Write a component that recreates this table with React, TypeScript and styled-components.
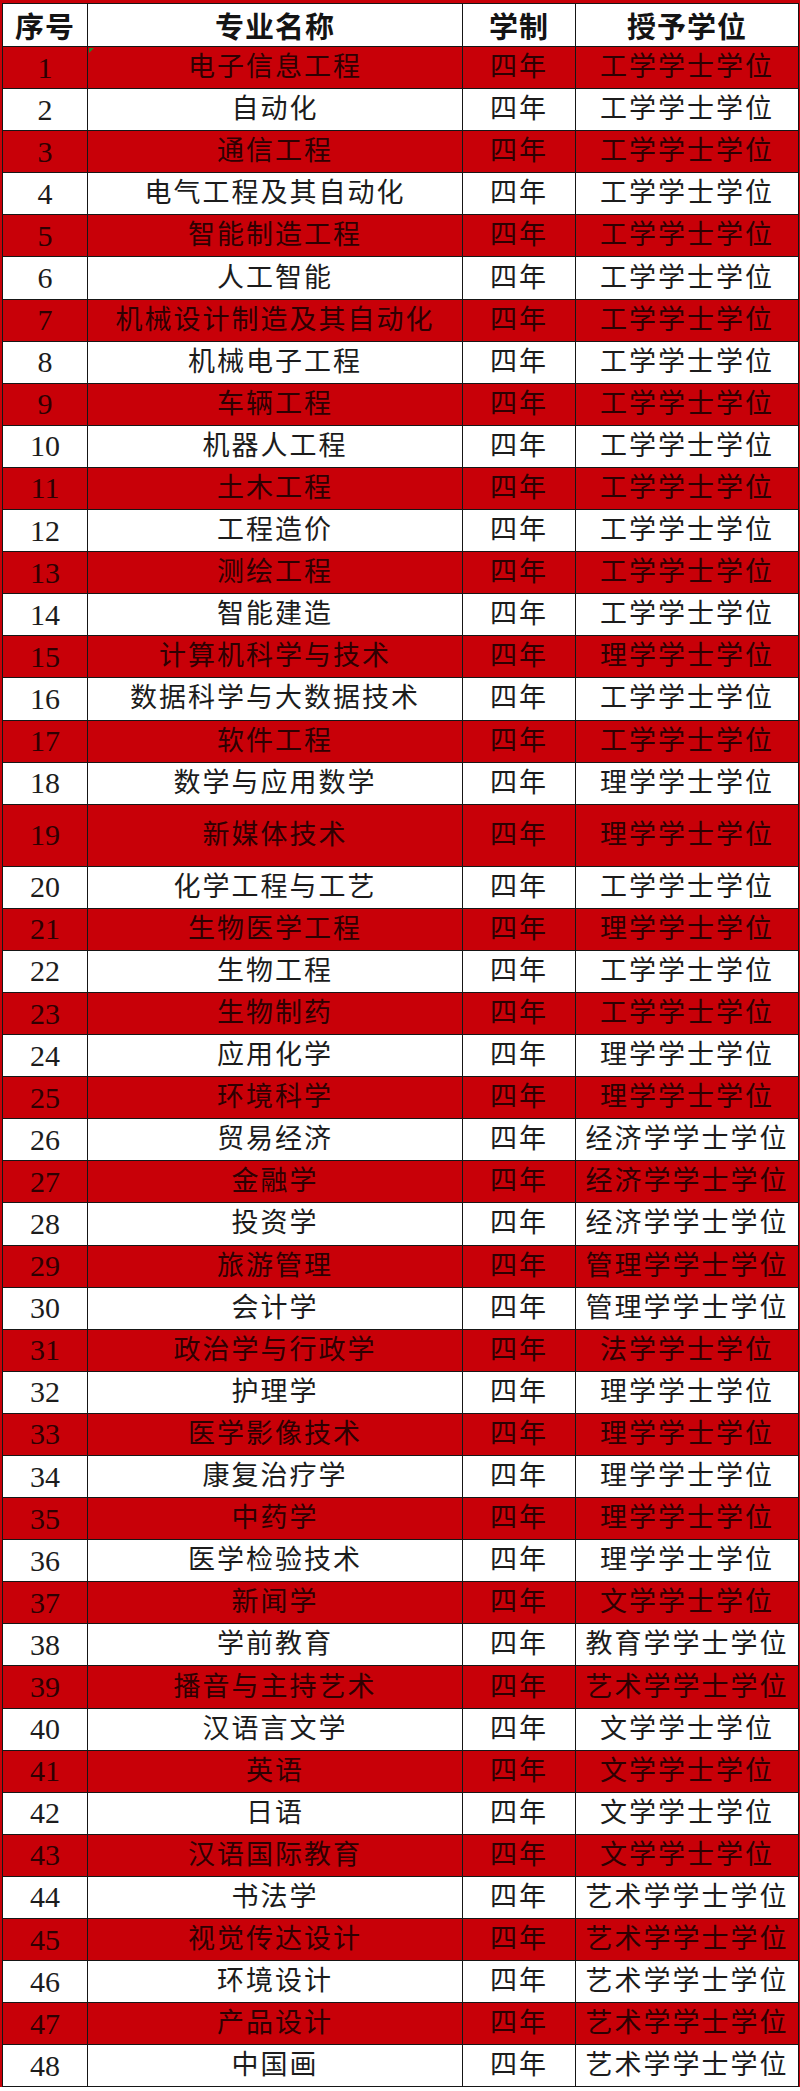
import { createGlobalStyle, styled } from "styled-components";

type Major = {
  no: number;
  name: string;
  degree: string;
  tall?: boolean;
};

const majors: Major[] = [
  { no: 1, name: "电子信息工程", degree: "工学学士学位" },
  { no: 2, name: "自动化", degree: "工学学士学位" },
  { no: 3, name: "通信工程", degree: "工学学士学位" },
  { no: 4, name: "电气工程及其自动化", degree: "工学学士学位" },
  { no: 5, name: "智能制造工程", degree: "工学学士学位" },
  { no: 6, name: "人工智能", degree: "工学学士学位" },
  { no: 7, name: "机械设计制造及其自动化", degree: "工学学士学位" },
  { no: 8, name: "机械电子工程", degree: "工学学士学位" },
  { no: 9, name: "车辆工程", degree: "工学学士学位" },
  { no: 10, name: "机器人工程", degree: "工学学士学位" },
  { no: 11, name: "土木工程", degree: "工学学士学位" },
  { no: 12, name: "工程造价", degree: "工学学士学位" },
  { no: 13, name: "测绘工程", degree: "工学学士学位" },
  { no: 14, name: "智能建造", degree: "工学学士学位" },
  { no: 15, name: "计算机科学与技术", degree: "理学学士学位" },
  { no: 16, name: "数据科学与大数据技术", degree: "工学学士学位" },
  { no: 17, name: "软件工程", degree: "工学学士学位" },
  { no: 18, name: "数学与应用数学", degree: "理学学士学位" },
  { no: 19, name: "新媒体技术", degree: "理学学士学位", tall: true },
  { no: 20, name: "化学工程与工艺", degree: "工学学士学位" },
  { no: 21, name: "生物医学工程", degree: "理学学士学位" },
  { no: 22, name: "生物工程", degree: "工学学士学位" },
  { no: 23, name: "生物制药", degree: "工学学士学位" },
  { no: 24, name: "应用化学", degree: "理学学士学位" },
  { no: 25, name: "环境科学", degree: "理学学士学位" },
  { no: 26, name: "贸易经济", degree: "经济学学士学位" },
  { no: 27, name: "金融学", degree: "经济学学士学位" },
  { no: 28, name: "投资学", degree: "经济学学士学位" },
  { no: 29, name: "旅游管理", degree: "管理学学士学位" },
  { no: 30, name: "会计学", degree: "管理学学士学位" },
  { no: 31, name: "政治学与行政学", degree: "法学学士学位" },
  { no: 32, name: "护理学", degree: "理学学士学位" },
  { no: 33, name: "医学影像技术", degree: "理学学士学位" },
  { no: 34, name: "康复治疗学", degree: "理学学士学位" },
  { no: 35, name: "中药学", degree: "理学学士学位" },
  { no: 36, name: "医学检验技术", degree: "理学学士学位" },
  { no: 37, name: "新闻学", degree: "文学学士学位" },
  { no: 38, name: "学前教育", degree: "教育学学士学位" },
  { no: 39, name: "播音与主持艺术", degree: "艺术学学士学位" },
  { no: 40, name: "汉语言文学", degree: "文学学士学位" },
  { no: 41, name: "英语", degree: "文学学士学位" },
  { no: 42, name: "日语", degree: "文学学士学位" },
  { no: 43, name: "汉语国际教育", degree: "文学学士学位" },
  { no: 44, name: "书法学", degree: "艺术学学士学位" },
  { no: 45, name: "视觉传达设计", degree: "艺术学学士学位" },
  { no: 46, name: "环境设计", degree: "艺术学学士学位" },
  { no: 47, name: "产品设计", degree: "艺术学学士学位" },
  { no: 48, name: "中国画", degree: "艺术学学士学位" },
];

const GlobalStyle = createGlobalStyle`
  body {
    margin: 0;
    background: #ffffff;
  }
`;

const Sheet = styled.div`
  width: 800px;
  background: #c80008;
  padding: 3px 2px 0 2px;
  box-sizing: border-box;
`;

const Table = styled.table`
  width: 796px;
  table-layout: fixed;
  border-collapse: collapse;
  font-family: "Liberation Serif", "Noto Sans CJK SC", serif;
`;

const HeadCell = styled.th`
  height: 41.5px;
  padding: 0;
  border: 1.5px solid #161616;
  background: #ffffff;
  color: #141414;
  font-size: 29px;
  font-weight: 700;
  letter-spacing: 1px;
  text-align: center;
  vertical-align: middle;
`;

const Row = styled.tr<{ $red: boolean; $tall?: boolean }>`
  height: ${(p) => (p.$tall ? "62px" : "42.1px")};
  background: ${(p) => (p.$red ? "#c80008" : "#ffffff")};
  color: ${(p) => (p.$red ? "#2e0002" : "#1c1c1c")};
`;

const Cell = styled.td<{ $marker?: boolean }>`
  position: relative;
  padding: 0;
  border: 1.5px solid #161616;
  font-size: 27px;
  font-weight: 400;
  letter-spacing: 2px;
  text-align: center;
  vertical-align: middle;
  white-space: nowrap;
  line-height: 1;

  ${(p) =>
    p.$marker &&
    `
    &::before {
      content: "";
      position: absolute;
      left: 1px;
      top: 1px;
      border-top: 5px solid #1f8a2c;
      border-right: 5px solid transparent;
    }
  `}
`;

const NumberCell = styled(Cell)`
  font-size: 30px;
  letter-spacing: 0;
`;

const App = () => (
  <>
    <GlobalStyle />
    <Sheet>
      <Table>
        <colgroup>
          <col style={{ width: 85 }} />
          <col style={{ width: 375 }} />
          <col style={{ width: 113 }} />
          <col style={{ width: 223 }} />
        </colgroup>
        <thead>
          <tr>
            <HeadCell>序号</HeadCell>
            <HeadCell>专业名称</HeadCell>
            <HeadCell>学制</HeadCell>
            <HeadCell>授予学位</HeadCell>
          </tr>
        </thead>
        <tbody>
          {majors.map((m) => (
            <Row key={m.no} $red={m.no % 2 === 1} $tall={m.tall}>
              <NumberCell>{m.no}</NumberCell>
              <Cell $marker={m.no === 1}>{m.name}</Cell>
              <Cell>四年</Cell>
              <Cell>{m.degree}</Cell>
            </Row>
          ))}
        </tbody>
      </Table>
    </Sheet>
  </>
);

export default App;
